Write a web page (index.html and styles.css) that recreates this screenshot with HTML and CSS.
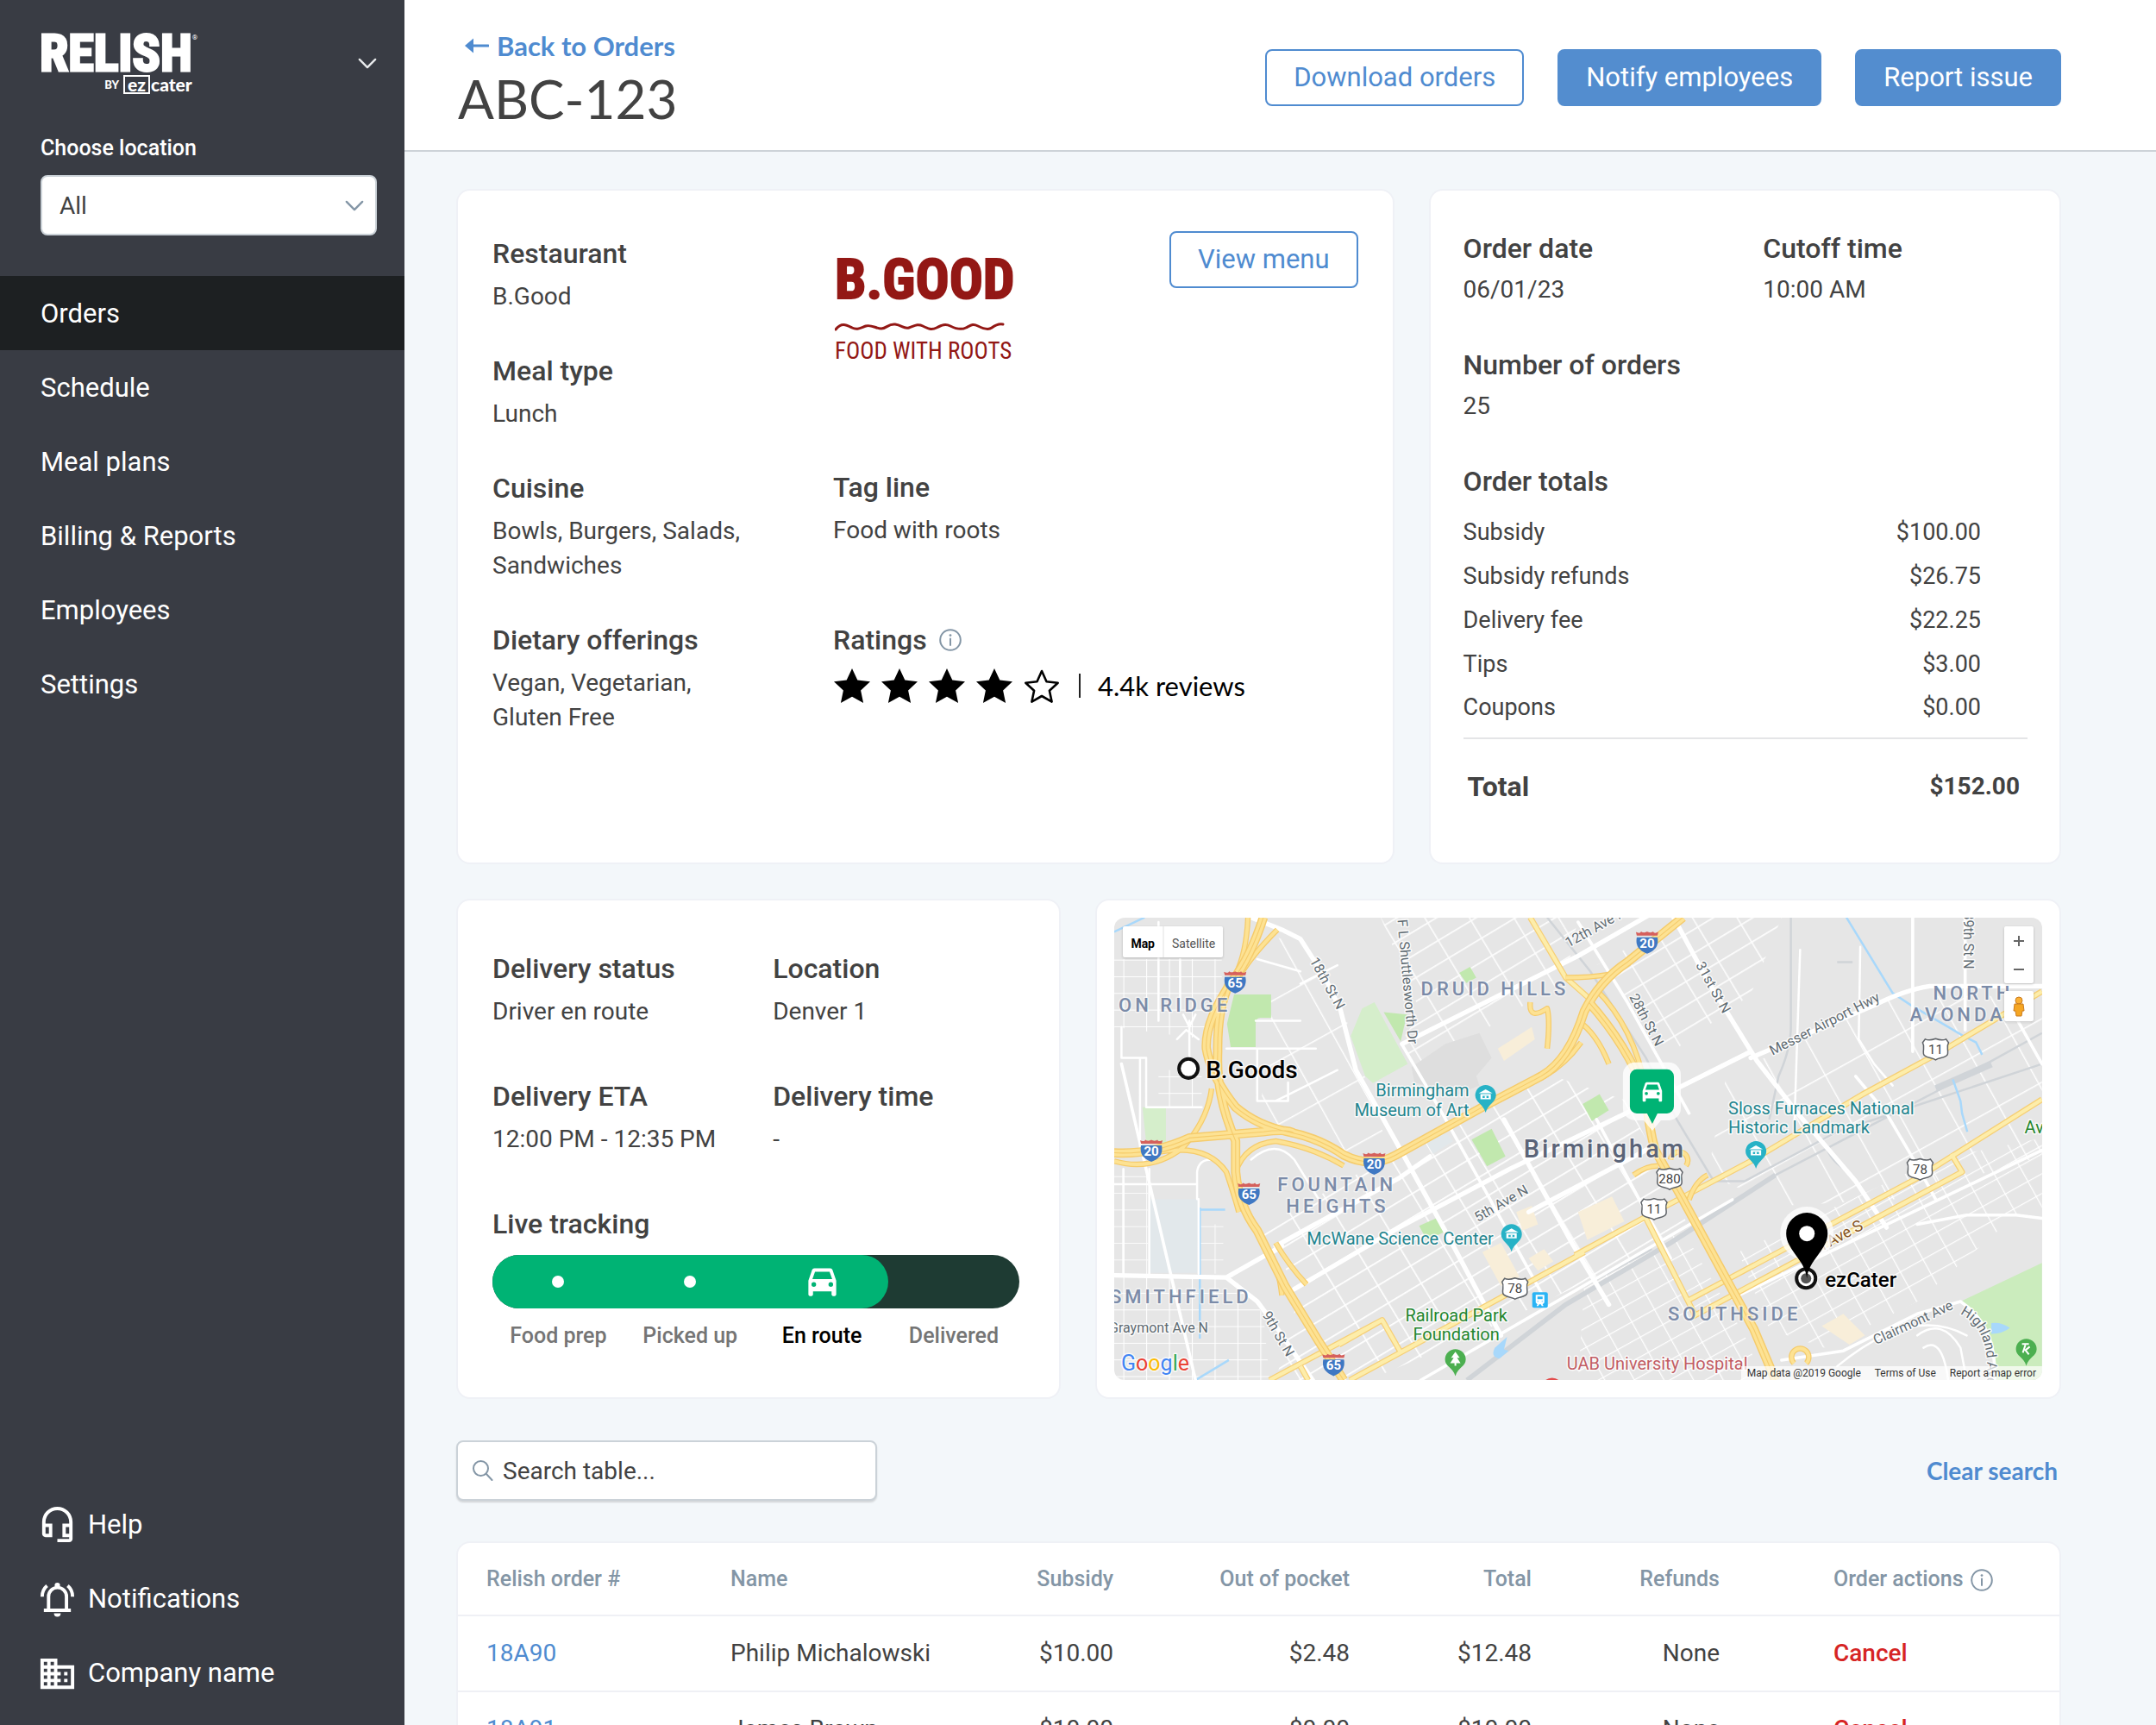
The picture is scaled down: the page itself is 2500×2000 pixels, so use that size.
FILE: index.html
```html
<!DOCTYPE html>
<html lang="en">
<head>
<meta charset="utf-8">
<meta name="viewport" content="width=device-width, initial-scale=1">
<title>ABC-123 | Relish by ezCater</title>
<link rel="stylesheet" href="styles.css">
</head>
<body>
<svg class="defs" aria-hidden="true">
  <symbol id="i-chevron" viewBox="0 0 24 14"><path d="M2 2l10 10L22 2" fill="none" stroke="currentColor" stroke-width="2.6" stroke-linecap="round" stroke-linejoin="round"/></symbol>
  <symbol id="i-info" viewBox="0 0 26 26"><circle cx="13" cy="13" r="11.8" fill="none" stroke="currentColor" stroke-width="2"/><path d="M13 11.5v7.500" stroke="currentColor" stroke-width="2" stroke-linecap="round"/><circle cx="13" cy="7.600" r="1.400" fill="currentColor"/></symbol>
  <symbol id="i-star" viewBox="0 0 44 42"><path d="M22 1l6.300 13.600 14.700 1.700-10.900 10.100 3 14.600L22 33.800 8.900 41l3-14.600L1 16.300l14.700-1.700z" fill="currentColor"/></symbol>
  <symbol id="i-star-empty" viewBox="0 0 44 42"><path d="M22 4l5.500 12.200 13.200 1.500-9.800 9L33.600 39.600 22 33 10.400 39.600l2.700-12.900-9.800-9 13.200-1.500z" fill="none" stroke="currentColor" stroke-width="2.600" stroke-linejoin="round"/></symbol>
  <symbol id="i-car" viewBox="0 0 24 24"><path fill="currentColor" fill-rule="evenodd" d="M18.920 5.010C18.720 3.900 18.160 3 17 3H7c-1.160 0-1.720.9-1.920 2.010L3 11v9c0 .55.45 1 1 1h1c.55 0 1-.45 1-1v-2h12v2c0 .55.45 1 1 1h1c.55 0 1-.45 1-1v-9zM6.500 15a1.500 1.500 0 1 1 0-3 1.500 1.500 0 0 1 0 3zm11 0a1.500 1.500 0 1 1 0-3 1.500 1.500 0 0 1 0 3zM5.600 10L7.300 5.300h9.400L18.400 10z"/></symbol>
  <symbol id="m-interstate" viewBox="-14 -14 28 28"><path d="M-12-6C-13 0-13 8 0 13 13 8 13 0 12-6z" fill="#3f78c3"/><path d="M-12-8l-1-4c4 2 5 1 6-.5 3 2 5 1 7 0 2 1 4 2 7 0 1 1.500 2 2.500 6 .5l-1 4z" fill="#d5605c"/></symbol>
  <symbol id="m-us" viewBox="-18 -14 36 28"><path d="M-12-12c4 2 8 1 12-.5 4 1.500 8 2.500 12 .5l3 4c-3 5 0 8-1 13-1 5-10 4-14 7-4-3-13-2-14-7-1-5 2-8-1-13z" fill="#fff" stroke="#5f6368" stroke-width="1.500"/></symbol>
  <symbol id="m-museum" viewBox="-14 -14 28 36"><path d="M0-12a12 12 0 0 1 12 12c0 8-9 10-12 20C-3 10-12 8-12 0A12 12 0 0 1 0-12z" fill="#27b2c6"/><path d="M-8-2.500L0-7l8 4.500zM-6-1.500h12v6H-6z" fill="#fff"/><path d="M-3.500.5h7v2.500h-7z" fill="#27b2c6"/><path d="M-1 .5h2v2.500h-2z" fill="#fff"/></symbol>
</svg>

<div class="app">
  <aside class="sidebar">
    <div class="brand">
      <div class="logo" aria-label="Relish by ezCater">
        <div class="logo-name">RELISH<sup>®</sup></div>
        <div class="logo-by"><small>BY</small><span class="ez">ez</span><span>cater</span></div>
      </div>
      <button class="icon-btn" type="button" aria-label="Switch product"><svg class="chev"><use href="#i-chevron"/></svg></button>
    </div>
    <div class="location">
      <label for="loc">Choose location</label>
      <div class="select">
        <select id="loc"><option>All</option></select>
        <svg class="chev"><use href="#i-chevron"/></svg>
      </div>
    </div>
    <nav class="nav">
      <a class="active" href="#orders">Orders</a>
      <a href="#schedule">Schedule</a>
      <a href="#plans">Meal plans</a>
      <a href="#billing">Billing &amp; Reports</a>
      <a href="#employees">Employees</a>
      <a href="#settings">Settings</a>
    </nav>
    <nav class="nav nav-foot">
      <a href="#help"><svg viewBox="0 0 24 24"><path fill="currentColor" d="M12 1a9 9 0 0 0-9 9v7c0 1.100.9 2 2 2h4v-8H5v-1a7 7 0 0 1 14 0v1h-4v8h4v1h-7v2h7c1.100 0 2-.9 2-2V10a9 9 0 0 0-9-9zM7 13v4H5v-4h2zm12 4h-2v-4h2v4z"/></svg>Help</a>
      <a href="#notifications"><svg viewBox="0 0 24 24"><g fill="none" stroke="currentColor" stroke-width="2"><path d="M6.800 18.300V10.200a5.300 5.300 0 0 1 10.600 0v8.100M4 18.400h16M3 10.300c0-2.700 1-4.900 2.900-6.500M21 10.300c0-2.700-1-4.900-2.900-6.500"/></g><circle cx="12" cy="3.600" r="1.600" fill="currentColor"/><path d="M10 20.200h4a2 2 0 0 1-4 0z" fill="currentColor"/></svg>Notifications</a>
      <a href="#company"><svg viewBox="0 0 24 24"><path fill="currentColor" d="M12 7V3H2v18h20V7H12zM6 19H4v-2h2v2zm0-4H4v-2h2v2zm0-4H4V9h2v2zm0-4H4V5h2v2zm4 12H8v-2h2v2zm0-4H8v-2h2v2zm0-4H8V9h2v2zm0-4H8V5h2v2zm10 12h-8v-2h2v-2h-2v-2h2v-2h-2V9h8v10zm-2-8h-2v2h2v-2zm0 4h-2v2h2v-2z"/></svg>Company name</a>
    </nav>
  </aside>

  <div class="page">
    <header class="topbar">
      <div class="title">
        <a class="back" href="#orders"><svg viewBox="0 0 28 20"><path d="M10 10h17" stroke="currentColor" stroke-width="3" stroke-linecap="round"/><path d="M0 10L10 1.500v17z" fill="currentColor"/></svg>Back to Orders</a>
        <h1>ABC-123</h1>
      </div>
      <div class="actions">
        <button class="btn" type="button">Download orders</button>
        <button class="btn solid" type="button">Notify employees</button>
        <button class="btn solid" type="button">Report issue</button>
      </div>
    </header>

    <main class="content">
      <div class="row row-top">
        <section class="card restaurant">
          <dl class="facts">
            <div><dt>Restaurant</dt><dd>B.Good</dd></div>
            <div><dt>Meal type</dt><dd>Lunch</dd></div>
            <div><dt>Cuisine</dt><dd>Bowls, Burgers, Salads, Sandwiches</dd></div>
            <div><dt>Dietary offerings</dt><dd>Vegan, Vegetarian, Gluten Free</dd></div>
          </dl>
          <div class="about">
            <div class="bgood" aria-label="B.Good, food with roots">
              <div class="bgood-name">B.GOOD</div>
              <svg viewBox="0 0 206 10"><path d="M1 8C8-1 14 3 20 6s10 0 16-2 12 3 18 3 8-6 16-5 10 6 16 4 10-5 16-2 10 5 16 2 10-5 16-2 12 5 18 2 8-5 14-2 12 5 16 2 8-5 13-4" fill="none" stroke="currentColor" stroke-width="3" stroke-linecap="round"/></svg>
              <div class="bgood-tag">FOOD WITH ROOTS</div>
            </div>
            <dl class="facts">
              <div><dt>Tag line</dt><dd>Food with roots</dd></div>
              <div class="ratings"><dt>Ratings <svg class="info"><use href="#i-info"/></svg></dt>
                <dd class="stars" aria-label="4 out of 5 stars">
                  <svg><use href="#i-star"/></svg><svg><use href="#i-star"/></svg><svg><use href="#i-star"/></svg><svg><use href="#i-star"/></svg><svg><use href="#i-star-empty"/></svg>
                  <span class="bar"></span><span>4.4k reviews</span>
                </dd></div>
            </dl>
          </div>
          <button class="btn" type="button">View menu</button>
        </section>

        <section class="card summary">
          <dl class="facts two">
            <div><dt>Order date</dt><dd>06/01/23</dd></div>
            <div><dt>Cutoff time</dt><dd>10:00 AM</dd></div>
            <div><dt>Number of orders</dt><dd>25</dd></div>
          </dl>
          <h2>Order totals</h2>
          <table class="totals">
            <tbody>
              <tr><th scope="row">Subsidy</th><td>$100.00</td></tr>
              <tr><th scope="row">Subsidy refunds</th><td>$26.75</td></tr>
              <tr><th scope="row">Delivery fee</th><td>$22.25</td></tr>
              <tr><th scope="row">Tips</th><td>$3.00</td></tr>
              <tr><th scope="row">Coupons</th><td>$0.00</td></tr>
            </tbody>
            <tfoot><tr><th scope="row">Total</th><td>$152.00</td></tr></tfoot>
          </table>
        </section>
      </div>

      <div class="row row-mid">
        <section class="card delivery">
          <dl class="facts two">
            <div><dt>Delivery status</dt><dd>Driver en route</dd></div>
            <div><dt>Location</dt><dd>Denver 1</dd></div>
            <div><dt>Delivery ETA</dt><dd>12:00 PM - 12:35 PM</dd></div>
            <div><dt>Delivery time</dt><dd>-</dd></div>
          </dl>
          <h2>Live tracking</h2>
          <div class="track"><div class="track-fill"><i></i><i></i><svg><use href="#i-car"/></svg></div></div>
          <ol class="steps"><li>Food prep</li><li>Picked up</li><li class="now">En route</li><li>Delivered</li></ol>
        </section>

        <section class="card map-card">
          <div class="map">
            <svg class="map-art" viewBox="0 0 1074 536" preserveAspectRatio="xMidYMid slice" role="img" aria-label="Map of Birmingham">
              <defs>
                <pattern id="p-diag" width="124" height="66" patternUnits="userSpaceOnUse" patternTransform="rotate(-31)"><path d="M0 0H124M0 0V66" stroke="#fff" stroke-width="9"/></pattern>
                <pattern id="p-diag2" width="148" height="180" patternUnits="userSpaceOnUse" patternTransform="rotate(-29)"><path d="M0 0H148M0 0V180" stroke="#fff" stroke-width="8"/></pattern>
                <pattern id="p-fine" width="84" height="56" patternUnits="userSpaceOnUse" patternTransform="rotate(-29)"><path d="M0 0H84M0 0V56" stroke="#fff" stroke-width="7"/></pattern>
                <pattern id="p-orth" width="74" height="54" patternUnits="userSpaceOnUse" patternTransform="translate(66 20)"><path d="M0 0H74M0 0V54" stroke="#fff" stroke-width="6"/></pattern>
              </defs>
              <!-- streets and areas are surveyed on a finer grid, 2.8 units to the pixel -->
              <g transform="translate(-13 -16) scale(.35714)">
                <path fill="#e6e6e6" d="M0 0h3100v1600H0z"/>
                <g>
                  <path fill="url(#p-orth)" d="M36 180H385V300L330 440 36 400zM180 540h140v120H180zM36 1210H420L520 1330 540 1545H36z"/>
                  <path fill="url(#p-orth)" opacity=".8" d="M36 860h110v350H36zM310 1040h80v160h-80z"/>
                  <path fill="url(#p-diag)" d="M500 1060L960 800 1460 560 1700 640 1900 1050 1560 1230 1200 1400 860 1545H560L640 1250z"/>
                  <path fill="url(#p-diag)" opacity=".9" d="M900 45h640l-40 200-480 300-60-90 70-100zM1600 200L1800 90 1900 45h300l-100 250-260 190z"/>
                  <path fill="url(#p-diag2)" d="M560 110l110 20 120 250 130 400-120 30-200-70-90-60z"/>
                  <path fill="url(#p-fine)" d="M1560 1240l320-180 200 340 60 145H1540z"/>
                  <path fill="url(#p-diag2)" d="M2020 560L2560 300 3044 300V820L2560 960 2200 980 1960 880z"/>
                  <path fill="url(#p-fine)" d="M2060 1130L2700 830 3044 760V1000L2960 1010 2640 1290 2340 1440 2160 1380z"/>
                </g>
                <!-- parks, campuses, blocks -->
                <path fill="#c1e8ae" d="M425 295H545V370H510Q495 370 495 390V465H414L402 390zM910 352L985 360 965 447zM1195 765L1260 730 1305 820 1245 852zM1155 225L1190 205 1210 240 1178 258zM1025 1045L1080 1020 1105 1065 1050 1092zM1555 650L1610 618 1640 670 1585 705zM172 985h28v60h-28zM232 985q10-25 40-20 35 15 27 58-30 18-67 5z"/>
                <path fill="#d5eecb" d="M840 340L880 320 988 520 875 582 850 560 803 430zM128 660H204V775H140z"/>
                <path fill="#cbecbd" d="M2780 1290L3044 1165V1545H2890Q2900 1370 2780 1290z"/>
                <path fill="#e2e8eb" d="M150 958H310L305 1197H148zM1045 770L1100 730 1135 770 1070 812z"/>
                <path fill="#dedede" d="M1000 530L1110 455 1220 420 1260 500 1210 560 1220 590 1150 620 1010 580z"/>
                <path fill="#f8eed9" d="M1230 1130l60-30 60 110-60 30zM1340 1000l50 -20 20 60 -50 20zM1380 1150l50-30 30 40-50 30zM1540 1000l110-50 40 80-120 60zM1280 470l110-70 10 40-100 70zM2330 1370l70-40 70 70-50 30z"/>
                <!-- rail -->
                <g fill="none" stroke="#d0d4d8">
                  <path stroke-width="16" d="M1180 1545L1500 1300 1840 1100 2180 880"/>
                  <path stroke-width="7" d="M2180 880L2700 610 3044 420M1540 1250L1780 1120M2230 45V400Q2230 470 2190 560L2160 700M2380 190H2430M1440 45L1580 220 1760 500 1860 700 1980 900 2080 900M2080 900L2380 740 3044 520M2340 780Q2360 840 2420 870"/>
                  <path stroke-width="22" d="M2700 600L2880 520"/>
                </g>
                <!-- water -->
                <path fill="none" stroke="#a8d8fb" stroke-width="7" d="M2410 45L2560 290 2620 330 2740 400 2790 430 2830 450 2850 490M2755 570L2780 640 2785 680 2802 740M36 92L135 45M300 1545L408 1480M314 985V1410M314 992H396"/>
                <path fill="#a8d8fb" d="M2880 1360q30-5 60 15-20 18-60 20zM1270 1440l40-35-10 40 15 5-30 25q-30-5-15-35z"/>
                <!-- main streets -->
                <g fill="none" stroke="#fff" stroke-linejoin="round" stroke-linecap="round">
                  <path stroke-width="15" d="M480 45L580 85 640 115 720 240 770 345 820 540 960 790 1120 1080 1290 1400M1300 700L1520 1100 1640 1300M560 1110L960 890 1060 820M970 455L1540 170 1800 20M1380 1000L1760 800M40 1205L400 1212 500 1290 560 1370 680 1545M400 1212L580 1110M620 1250L960 1050 1320 860 1820 620 2100 480M1850 45L1960 250 2120 510 2260 690 2440 900 2540 1050M2100 500L2500 330Q2600 280 2680 268H3044"/>
                  <path stroke-width="10" d="M968 455L1100 680 1250 950 1420 1260M1600 700L1840 1150M1030 1545L2040 960M2040 1280L3044 800M2200 1480L2400 1450 2640 1330 2780 1290Q2900 1370 2890 1545M1540 60L1700 320 1900 680M2440 560L2540 680 2640 850 2700 960M2640 1040L2800 1010 2960 1010 3044 1020M2960 370L3044 520M2625 45V480M2795 45V410M60 520L300 1545"/>
                  <path stroke-width="7" d="M400 470H690M495 380H640M500 470V640H600V580M120 500V800H36M60 400V500H140V660H320M180 380V60M250 180V340M150 860V1200M305 958V870Q310 830 350 830 400 850 410 900M36 910H300M66 860V1200M310 958V1200M2380 1500Q2620 1300 2800 1400M2640 1400Q2720 1340 2780 1440L2800 1545M2660 1440Q2720 1400 2740 1545M2260 150L2240 760M2455 140L2450 440 2500 520 2560 590M480 830Q560 760 620 830L700 960M500 180L640 220M640 260L760 200M560 640L760 540M260 360l20 40 20-40M240 440l30-30 40 30M280 380v120"/>
                </g>
                <!-- arterials -->
                <g fill="none" stroke-linejoin="round">
                  <path stroke="#f6cf75" stroke-width="19" d="M1385 45L1500 240 1590 320M1530 1140L1760 1015 2100 835 2460 620 2700 490 3044 285M540 1545L905 1350 965 1455 1560 1130M800 1545L965 1455M765 1430L905 1350M1755 1010L1920 1335M1900 1285L2640 890 3044 635M1910 1340L2785 870 2750 812M640 1500L665 1545"/>
                  <path stroke="#fdedaa" stroke-width="12" d="M1385 45L1500 240 1590 320M1530 1140L1760 1015 2100 835 2460 620 2700 490 3044 285M540 1545L905 1350 965 1455 1560 1130M800 1545L965 1455M765 1430L905 1350M1755 1010L1920 1335M1900 1285L2640 890 3044 635M1910 1340L2785 870 2750 812M640 1500L665 1545"/>
                </g>
                <!-- freeways -->
                <g fill="none" stroke-linejoin="round">
                  <path stroke="#f5cb6b" stroke-width="18" d="M470 45Q465 160 430 230M565 85Q480 170 440 240M1500 240Q1580 240 1640 230M1440 470Q1450 380 1440 340 1380 380 1385 320M1540 380Q1600 420 1640 520M1550 450Q1500 520 1430 560M1840 830a28 28 0 1 1 50 20M1720 880Q1760 850 1800 850M1900 960Q1920 900 1960 880M430 870Q460 780 560 770 680 790 780 850M36 835Q160 870 260 790 340 700 352 600M160 810Q330 770 400 870 430 960 440 1000M2240 1490a28 28 0 1 1 40 0M580 1270Q570 1180 540 1130M660 1235Q600 1170 560 1100M1600 280Q1720 400 1760 600"/>
                  <path stroke="#fde293" stroke-width="11" d="M470 45Q465 160 430 230M565 85Q480 170 440 240M1500 240Q1580 240 1640 230M1440 470Q1450 380 1440 340 1380 380 1385 320M1540 380Q1600 420 1640 520M1550 450Q1500 520 1430 560M1840 830a28 28 0 1 1 50 20M1720 880Q1760 850 1800 850M1900 960Q1920 900 1960 880M430 870Q460 780 560 770 680 790 780 850M36 835Q160 870 260 790 340 700 352 600M160 810Q330 770 400 870 430 960 440 1000M2240 1490a28 28 0 1 1 40 0M580 1270Q570 1180 540 1130M660 1235Q600 1170 560 1100M1600 280Q1720 400 1760 600"/>
                  <path stroke="#f5cb6b" stroke-width="30" d="M520 45Q480 170 420 250 330 380 335 470 350 560 430 660 500 720 600 740 700 760 780 815 870 860 950 815L1230 660 1420 560Q1510 510 1560 350 1610 250 1700 190L1880 45M410 260Q370 340 372 480 365 620 430 770V870Q440 980 500 1060L590 1240 700 1420 780 1545M36 808Q160 815 280 760L520 740Q600 730 620 745M1575 320Q1700 460 1760 620 1770 730 1790 800L1880 960 2000 1180 2110 1380 2180 1545"/>
                  <path stroke="#fde293" stroke-width="22" d="M520 45Q480 170 420 250 330 380 335 470 350 560 430 660 500 720 600 740 700 760 780 815 870 860 950 815L1230 660 1420 560Q1510 510 1560 350 1610 250 1700 190L1880 45M410 260Q370 340 372 480 365 620 430 770V870Q440 980 500 1060L590 1240 700 1420 780 1545M36 808Q160 815 280 760L520 740Q600 730 620 745M1575 320Q1700 460 1760 620 1770 730 1790 800L1880 960 2000 1180 2110 1380 2180 1545"/>
                  <path stroke="#f5cb6b" stroke-width="3" d="M520 45Q480 170 420 250 330 380 335 470 350 560 430 660 500 720 600 740 700 760 780 815 870 860 950 815L1230 660 1420 560Q1510 510 1560 350 1610 250 1700 190L1880 45M410 260Q370 340 372 480 365 620 430 770V870Q440 980 500 1060L590 1240 700 1420 780 1545M36 808Q160 815 280 760L520 740Q600 730 620 745M1575 320Q1700 460 1760 620 1770 730 1790 800L1880 960 2000 1180 2110 1380 2180 1545"/>
                </g>
              </g>

              <g class="m-area">
                <text x="5" y="109">ON RIDGE</text><text x="355" y="90">DRUID HILLS</text>
                <text x="189" y="317">FOUNTAIN</text><text x="199" y="342">HEIGHTS</text>
                <text x="-5" y="447">SMITHFIELD</text><text x="641" y="467">SOUTHSIDE</text>
                <text x="948" y="95">NORTH</text><text x="921" y="120">AVONDALE</text>
              </g>
              <text class="m-city" x="474" y="278">Birmingham</text>
              <g class="m-street">
                <text transform="translate(226 50) rotate(61)">18th St N</text>
                <text transform="translate(328 3) rotate(85)">F L Shuttlesworth Dr</text>
                <text transform="translate(526 35) rotate(-29)">12th Ave N</text>
                <text transform="translate(421 353) rotate(-30)">5th Ave N</text>
                <text transform="translate(171 460) rotate(60)">9th St N</text>
                <text transform="translate(-6 481)">Graymont Ave N</text>
                <text transform="translate(596 92) rotate(62)">28th St N</text>
                <text transform="translate(673 55) rotate(61)">31st St N</text>
                <text transform="translate(762 160) rotate(-27)">Messer Airport Hwy</text>
                <text transform="translate(984 -6) rotate(90)">39th St N</text>
                <text transform="translate(882 495) rotate(-25)">Clairmont Ave</text>
                <path id="highland" d="M979 459Q1016 476 1010 540" fill="none"/>
                <text><textPath href="#highland">Highland Ave</textPath></text>
                <text class="m-brown" transform="translate(811 391) rotate(-28)">th Ave S</text>
              </g>
              <g class="m-poi">
                <text x="411" y="207" text-anchor="end">Birmingham</text><text x="411" y="230" text-anchor="end">Museum of Art</text>
                <text x="223" y="379">McWane Science Center</text>
                <text x="711" y="228">Sloss Furnaces National</text><text x="711" y="250">Historic Landmark</text>
                <g class="m-green"><text x="396" y="468" text-anchor="middle">Railroad Park</text><text x="396" y="490" text-anchor="middle">Foundation</text><text x="1054" y="250">Avondale</text></g>
                <text class="m-red" x="524" y="524">UAB University Hospital</text>
              </g>
              <g class="m-num m-int">
                <g transform="translate(140 75)"><use href="#m-interstate" x="-14" y="-14" width="28" height="28"/><text y="6">65</text></g>
                <g transform="translate(43 270)"><use href="#m-interstate" x="-14" y="-14" width="28" height="28"/><text y="6">20</text></g>
                <g transform="translate(301 285)"><use href="#m-interstate" x="-14" y="-14" width="28" height="28"/><text y="6">20</text></g>
                <g transform="translate(156 320)"><use href="#m-interstate" x="-14" y="-14" width="28" height="28"/><text y="6">65</text></g>
                <g transform="translate(254 518)"><use href="#m-interstate" x="-14" y="-14" width="28" height="28"/><text y="6">65</text></g>
                <g transform="translate(617 29)"><use href="#m-interstate" x="-14" y="-14" width="28" height="28"/><text y="6">20</text></g>
              </g>
              <g class="m-num">
                <g transform="translate(951 153)"><use href="#m-us" x="-18" y="-14" width="36" height="28"/><text y="5">11</text></g>
                <g transform="translate(643 303)"><use href="#m-us" x="-18" y="-14" width="36" height="28"/><text y="5">280</text></g>
                <g transform="translate(625 338)"><use href="#m-us" x="-18" y="-14" width="36" height="28"/><text y="5">11</text></g>
                <g transform="translate(933 292)"><use href="#m-us" x="-18" y="-14" width="36" height="28"/><text y="5">78</text></g>
                <g transform="translate(464 430)"><use href="#m-us" x="-18" y="-14" width="36" height="28"/><text y="5">78</text></g>
              </g>
              <use href="#m-museum" x="416" y="192" width="28" height="36"/>
              <use href="#m-museum" x="446" y="353" width="28" height="36"/>
              <use href="#m-museum" x="729" y="257" width="28" height="36"/>
              <g fill="#4caf50"><path d="M395 500a12 12 0 0 1 12 12c0 8-9 9-12 19-3-10-12-11-12-19a12 12 0 0 1 12-12z"/><path d="M1056 488a12 12 0 0 1 12 12c0 8-9 9-12 19-3-10-12-11-12-19a12 12 0 0 1 12-12z"/></g>
              <path fill="#fff" d="M395 503l5 7h-3l4 6h-5v3h-2v-3h-5l4-6h-3z"/>
              <path fill="none" stroke="#fff" stroke-width="2" d="M1051 494h8M1055 495l-3 9M1060 497l-5 4 4 5"/>
              <rect x="484" y="434" width="18" height="18" rx="2" fill="#2ab4f5"/><path fill="#fff" fill-rule="evenodd" d="M488 437h10v9l-2 2 1 2h-2l-1-2h-2l-1 2h-2l1-2-2-2zM490 439v3h6v-3zM490 444v1h1v-1zM495 444v1h1v-1z"/>
              <circle cx="507" cy="545" r="12" fill="#e24b4b"/>

              <circle cx="86" cy="175" r="11" fill="#fff" stroke="#111" stroke-width="4"/>
              <text class="m-place big" x="106" y="186">B.Goods</text>
              <path d="M603 168h39a14 14 0 0 1 14 14v39a14 14 0 0 1-14 14h-9l-10 12-10-12h-10a14 14 0 0 1-14-14v-39a14 14 0 0 1 14-14z" fill="#fff" opacity=".8"/>
              <path d="M605 176h35a8 8 0 0 1 8 8v35a8 8 0 0 1-8 8h-11l-6 12-6-12h-12a8 8 0 0 1-8-8v-35a8 8 0 0 1 8-8z" fill="#00b374"/>
              <svg x="608" y="187" width="30" height="30" color="#fff"><use href="#i-car"/></svg>
              <circle cx="802" cy="366" r="31" fill="#fff" opacity=".75"/>
              <circle cx="801" cy="418" r="11" fill="#fff" stroke="#111" stroke-width="4"/><circle cx="801" cy="418" r="6" fill="#555"/>
              <path d="M802 342a24 24 0 0 1 24 24c0 19-22 30-24 52-2-22-24-33-24-52a24 24 0 0 1 24-24z"/><circle cx="802" cy="366" r="9" fill="#fff"/>
              <text class="m-place" x="823" y="428">ezCater</text>
              <text class="m-google" x="8" y="525"><tspan fill="#4285f4">G</tspan><tspan fill="#ea4335">o</tspan><tspan fill="#fbbc05">o</tspan><tspan fill="#4285f4">g</tspan><tspan fill="#34a853">l</tspan><tspan fill="#ea4335">e</tspan></text>
            </svg>
            <div class="map-type"><button class="on" type="button">Map</button><button type="button">Satellite</button></div>
            <div class="map-tools">
              <div class="map-zoom"><button type="button" aria-label="Zoom in"><svg viewBox="0 0 14 14"><path d="M1 7h12M7 1v12" stroke="#666" stroke-width="2"/></svg></button><button type="button" aria-label="Zoom out"><svg viewBox="0 0 14 14"><path d="M1 7h12" stroke="#666" stroke-width="2"/></svg></button></div>
              <button class="pegman" type="button" aria-label="Street view"><svg viewBox="0 0 16 24"><circle cx="8" cy="5" r="4" fill="#fbb034" stroke="#c97a1e"/><path d="M3 9h10l1 8h-2l-1 6H5l-1-6H2z" fill="#f5a623" stroke="#c97a1e"/></svg></button>
            </div>
            <div class="map-legal"><span>Map data @2019 Google</span><a href="#terms">Terms of Use</a><a href="#report">Report a map error</a></div>
          </div>
        </section>
      </div>

      <div class="tools">
        <label class="search"><svg viewBox="0 0 24 24"><path d="M15.500 15.500L22.500 23M18 9.500A8.500 8.500 0 1 1 1 9.500a8.500 8.500 0 0 1 17 0z" fill="none" stroke="currentColor" stroke-width="2" stroke-linecap="round"/></svg><input type="search" aria-label="Search table" placeholder="Search table..."></label>
        <a class="clear" href="#clear">Clear search</a>
      </div>

      <section class="card table-card">
        <table class="orders">
          <colgroup><col class="c-id"><col class="c-name"><col class="c-sub"><col class="c-out"><col class="c-total"><col class="c-ref"><col></colgroup>
          <thead><tr><th>Relish order #</th><th>Name</th><th class="num">Subsidy</th><th class="num">Out of pocket</th><th class="num">Total</th><th class="num">Refunds</th><th class="act">Order actions <svg class="info"><use href="#i-info"/></svg></th></tr></thead>
          <tbody>
            <tr><td><a href="#18A90">18A90</a></td><td>Philip Michalowski</td><td class="num">$10.00</td><td class="num">$2.48</td><td class="num">$12.48</td><td class="num">None</td><td class="act"><button type="button">Cancel</button></td></tr>
            <tr><td><a href="#18A91">18A91</a></td><td>James Brown</td><td class="num">$10.00</td><td class="num">$0.00</td><td class="num">$10.00</td><td class="num">None</td><td class="act"><button type="button">Cancel</button></td></tr>
          </tbody>
        </table>
      </section>
    </main>
  </div>
</div>
</body>
</html>
```
FILE: styles.css
```css
* { box-sizing: border-box; }
body { margin: 0; font-family: Roboto, "Liberation Sans", sans-serif; font-size: 28px; line-height: 40px; color: #424242; background: #f3f7fa; }
h1, h2, dl, dd, ol { margin: 0; padding: 0; }
a { text-decoration: none; color: #4f8bd0; }
button { font: inherit; cursor: pointer; }
svg { display: block; flex: none; }
.defs { position: absolute; width: 0; height: 0; }

.app { display: flex; height: 100vh; overflow: hidden; }
.page { flex: 1; min-width: 0; overflow-y: auto; scrollbar-width: none; }

/* sidebar */
.sidebar { flex: none; width: 469px; display: flex; flex-direction: column; padding-bottom: 18px; background: #393c44; color: #fff; }
.brand { display: flex; justify-content: space-between; align-items: center; padding: 36px 32px 0 46px; height: 110px; }
.logo { display: flex; flex-direction: column; align-items: flex-end; }
.logo-name { position: relative; font: 700 60px/50px "Liberation Sans Narrow", "Roboto Condensed", Roboto, sans-serif; -webkit-text-stroke: 3px #fff; }
.logo-name sup { position: absolute; left: 100%; top: 3px; font: 8px/8px Roboto, sans-serif; -webkit-text-stroke: 0; }
.logo-by { display: flex; align-items: center; font: 900 21px/20px Lato, sans-serif; }
.logo-by small { font-size: 13px; margin-right: 5px; }
.ez { border: 2px solid #fff; padding: 0 3px 1px; line-height: 17px; margin-right: 1px; }
.icon-btn { border: 0; background: none; padding: 0; color: #e8eaec; }
.chev { width: 22px; height: 13px; }
.location { padding: 47px 32px 0 47px; }
.location label { display: block; font-size: 25px; font-weight: 500; line-height: 30px; margin-bottom: 16px; }
.select { position: relative; color: #8496a6; }
.select select { width: 100%; height: 70px; padding: 0 20px; appearance: none; border: 2px solid #cbd2d8; border-radius: 8px; background: #fff; color: #424242; font: 28px Roboto, sans-serif; }
.select .chev { position: absolute; right: 15px; top: 29px; pointer-events: none; }
.nav { display: flex; flex-direction: column; margin-top: 47px; }
.nav a { display: flex; align-items: center; height: 86px; padding: 2px 0 0 47px; color: #fff; font-size: 31px; }
.nav .active { background: #1d2022; }
.nav-foot { margin-top: auto; }
.nav-foot a { padding-left: 43px; gap: 12px; }
.nav-foot svg { width: 47px; height: 47px; }

/* top bar */
.topbar { display: flex; justify-content: space-between; align-items: flex-start; min-height: 176px; padding: 34px 110px 0 62px; background: #fff; border-bottom: 2px solid #cdd3d8; }
.back { display: flex; align-items: center; gap: 9px; padding-left: 8px; font: 700 31px/38px Lato, sans-serif; color: #4f8bd0; }
.back svg { width: 28px; height: 20px; }
h1 { font: 400 62px/74px Lato, sans-serif; margin-top: 5px; }
.actions { display: flex; gap: 39px; padding-top: 23px; }
.btn { height: 66px; padding: 0 31px; border: 2px solid #4f8bd0; border-radius: 8px; background: #fff; color: #4f8bd0; font-size: 31px; white-space: nowrap; }
.btn.solid { background: #538dcf; border-color: #538dcf; color: #fff; }

/* cards */
.content { padding: 43px 110px 0 60px; }
.row { display: grid; gap: 40px; margin-bottom: 40px; }
.row-top { grid-template-columns: 1087fr 733fr; }
.row-mid { grid-template-columns: 701fr 1119fr; }
.card { background: #fff; border: 2px solid #eff1f6; border-radius: 16px; min-width: 0; }
.facts { display: grid; align-content: start; row-gap: 45px; }
dt, h2 { font-size: 32px; font-weight: 500; line-height: 42px; }
dd { margin-top: 9px; }
.two { grid-template-columns: 1fr 1fr; }
.info { width: 26px; height: 26px; color: #8496a6; }

.restaurant { display: grid; grid-template-columns: 395px 1fr auto; align-items: start; min-height: 783px; padding: 47px 40px 40px; }
.restaurant > .facts { padding-top: 5px; }
.restaurant > .facts dd { max-width: 310px; }
.about { padding-top: 14px; min-width: 0; }
.bgood { display: flex; flex-direction: column; justify-content: space-between; width: 208px; height: 140px; margin-bottom: 122px; padding: 0 2px; color: #931815; white-space: nowrap; }
.bgood svg { width: 206px; height: 10px; }
.bgood-name { font: 700 65px/84px "Liberation Sans Narrow", "Roboto Condensed", Roboto, sans-serif; -webkit-text-stroke: 2px #931815; }
.bgood-tag { font: 400 27px/30px "Liberation Sans Narrow", "Roboto Condensed", Roboto, sans-serif; }
.about .facts { row-gap: 86px; white-space: nowrap; }
.ratings dt { display: flex; align-items: center; gap: 14px; }
.stars { display: flex; align-items: center; gap: 11px; height: 50px; margin-top: 7px; font: 31px/40px Lato, sans-serif; color: #000; }
.stars svg { width: 44px; height: 42px; }
.stars .bar { width: 2px; height: 28px; margin: 0 9px 0 10px; background: #222; }

.summary { padding: 46px 37px 30px 38px; }
.summary dd { margin-top: 7px; }
.summary .facts { grid-template-columns: 347fr 306fr; row-gap: 46px; }
.summary h2 { margin-top: 46px; }
.totals { width: 100%; margin-top: 12px; border-collapse: collapse; font-size: 27px; }
.totals th { font-weight: 400; text-align: left; padding: 0; height: 51px; }
.totals td { text-align: right; padding: 0 54px 0 0; }
.totals tbody tr:last-child > * { height: 61px; padding-bottom: 10px; border-bottom: 2px solid #e4e5e7; }
.totals tfoot th { font-size: 32px; font-weight: 700; height: 110px; padding-left: 5px; }
.totals tfoot td { font-size: 28px; font-weight: 700; padding-right: 9px; }

.delivery { padding: 58px 46px 40px 40px; }
.delivery .facts { row-gap: 57px; }
.delivery h2 { margin-top: 57px; }
.delivery .two { grid-template-columns: 325fr 286fr; white-space: nowrap; }
.track { height: 62px; margin-top: 15px; border-radius: 31px; background: #1e3b33; }
.track-fill { display: grid; grid-template-columns: repeat(3, 1fr); place-items: center; width: 75%; height: 62px; border-radius: 31px; background: #00b374; color: #fff; }
.track-fill i { width: 14px; height: 14px; border-radius: 50%; background: #fff; }
.track-fill svg { width: 43px; height: 43px; }
.steps { display: grid; grid-template-columns: repeat(4, 1fr); margin-top: 17px; list-style: none; text-align: center; font-size: 25px; font-weight: 500; line-height: 30px; color: #757575; }
.steps .now { color: #000; }

/* map */
.map-card { padding: 20px; }
.map { position: relative; height: 100%; min-height: 536px; overflow: hidden; border-radius: 12px; }
.map-art { width: 100%; height: 536px; }
.map-art text { font-family: Roboto, sans-serif; paint-order: stroke; stroke: #fff; stroke-width: 3px; stroke-linejoin: round; stroke-opacity: .8; }
.m-area text { font-size: 22px; font-weight: 500; letter-spacing: 4px; fill: #7b8ba8; }
.m-area text, .map-art .m-city { stroke-opacity: .5; }
.m-city { font-size: 29px; font-weight: 500; letter-spacing: 3px; fill: #5b6478; }
.m-street text { font-size: 16px; fill: #5f6b72; }
.m-street .m-brown { font-size: 18px; fill: #85531e; }
.m-poi text { font-size: 20px; fill: #23858f; }
.m-poi .m-green text { fill: #24862f; }
.m-poi .m-red { fill: #c25d64; }
.m-num text { font-size: 15px; text-anchor: middle; fill: #444; stroke: none; }
.m-int text { font-weight: 700; fill: #fff; }
.map-art .m-place { font-size: 24px; font-weight: 500; fill: #000; }
.map-art .big { font-size: 28px; }
.map-art .m-google { font-size: 25px; }
.map-type { position: absolute; left: 10px; top: 10px; display: flex; background: #fff; border-radius: 2px; box-shadow: 0 1px 3px #0003; }
.map-type button { height: 36px; padding: 0 9px; border: 0; background: none; font-size: 14px; color: #555; }
.map-type .on { border-right: 2px solid #f0f0f0; color: #000; font-weight: 700; }
.map-tools { position: absolute; right: 10px; top: 10px; display: grid; gap: 9px; width: 34px; }
.map-tools button { display: grid; place-items: center; width: 100%; height: 33px; padding: 0; border: 0; background: none; }
.map-tools svg { width: 14px; height: 14px; }
.map-zoom, .map-tools .pegman { background: #fff; border-radius: 2px; box-shadow: 0 1px 3px #0003; }
.map-tools .pegman { height: 35px; }
.map-tools .pegman svg { width: 16px; height: 24px; }
.map-legal { position: absolute; right: 0; bottom: 0; display: flex; gap: 16px; padding: 0 7px 0 7px; background: #ffffffb3; font-size: 12px; line-height: 16px; color: #333; }
.map-legal a { color: #333; }

/* search */
.tools { display: flex; align-items: center; justify-content: space-between; margin: 48px 0 47px; padding-right: 4px; }
.search { display: flex; align-items: center; gap: 11px; width: 488px; height: 70px; padding: 0 17px; border: 2px solid #cbd2d8; border-radius: 8px; background: #fff; box-shadow: 0 2px 2px #0002; color: #8496a6; }
.search svg { width: 24px; height: 24px; }
.search input { flex: 1; min-width: 0; border: 0; padding: 0; outline: 0; background: none; font: 28px Roboto, sans-serif; color: #424242; }
.search input::placeholder { color: #424242; opacity: 1; }
.clear { font: 700 28px/40px Lato, sans-serif; }

/* orders table */
.table-card { overflow: hidden; }
.orders { width: 100%; table-layout: fixed; border-collapse: collapse; white-space: nowrap; }
.orders th, .orders td { padding: 0 37px 0 33px; text-align: left; }
.orders th { height: 84px; font-size: 25px; font-weight: 500; color: #8496a6; }
.orders td { height: 88px; }
.orders tr { border-bottom: 2px solid #eff0f5; }
.orders .num { text-align: right; }
.orders .act { padding: 0 0 0 95px; }
.act .info { display: inline-block; vertical-align: -6px; margin-left: 2px; }
.act button { border: 0; padding: 0; background: none; color: #d62424; font-weight: 500; }
.c-id, .c-name { width: 283px; }
.c-sub { width: 231px; }
.c-out { width: 274px; }
.c-total { width: 211px; }
.c-ref { width: 218px; }
```
